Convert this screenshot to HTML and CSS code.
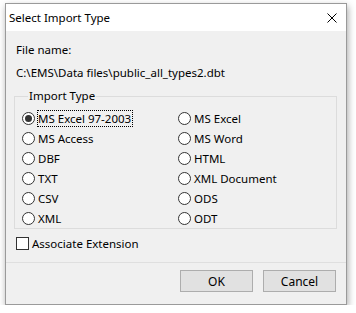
FILE: index.html
```html
<!DOCTYPE html>
<html lang="en">

<head>
    <meta charset="UTF-8" />
    <title>Select Import Type</title>
    <link rel="stylesheet" href="styles.css">
</head>

<body>
    <div class="window">
        <div class="titlebar">
            <span class="title">Select Import Type</span>
            <svg class="close" width="10" height="10" viewBox="0 0 10 10">
                <path d="M0.5 0.5 L9.5 9.5 M9.5 0.5 L0.5 9.5" stroke="#000" stroke-width="1" fill="none" />
            </svg>
        </div>

        <div class="content">
            <div class="line">File name:</div>
            <div class="line path">C:\EMS\Data files\public_all_types2.dbt</div>

            <fieldset class="group">
                <legend>Import Type</legend>
                <div class="options">
                    <div class="option"><span class="radio checked"></span><span class="label focus">MS Excel 97-2003</span></div>
                    <div class="option"><span class="radio"></span><span class="label">MS Excel</span></div>
                    <div class="option"><span class="radio"></span><span class="label">MS Access</span></div>
                    <div class="option"><span class="radio"></span><span class="label">MS Word</span></div>
                    <div class="option"><span class="radio"></span><span class="label">DBF</span></div>
                    <div class="option"><span class="radio"></span><span class="label">HTML</span></div>
                    <div class="option"><span class="radio"></span><span class="label">TXT</span></div>
                    <div class="option"><span class="radio"></span><span class="label">XML Document</span></div>
                    <div class="option"><span class="radio"></span><span class="label">CSV</span></div>
                    <div class="option"><span class="radio"></span><span class="label">ODS</span></div>
                    <div class="option"><span class="radio"></span><span class="label">XML</span></div>
                    <div class="option"><span class="radio"></span><span class="label">ODT</span></div>
                </div>
            </fieldset>

            <div class="check-row"><span class="checkbox"></span><span class="label">Associate Extension</span></div>
        </div>

        <div class="footer">
            <button class="btn">OK</button>
            <button class="btn">Cancel</button>
        </div>
    </div>
</body>

</html>
```

FILE: styles.css
```css
:root {
    --face: #f0f0f0;
    --text: #000000;
    --mark: #333333;
}

body {
    margin: 0;
    background: #ffffff;
    font-family: 'Noto Sans', 'Segoe UI', sans-serif;
    font-size: 11.5px;
    color: var(--text);
}

.window {
    margin: 3px 0 0 5px;
    width: 340px;
    border: 1px solid #9a9a9a;
    background: var(--face);
    box-shadow: 1px 3px 7px rgba(0, 0, 0, 0.35);
}

.titlebar {
    height: 27px;
    background: #ffffff;
    display: flex;
    align-items: center;
    justify-content: space-between;
    padding: 0 9px 0 3px;
}

.close {
    display: block;
}

.content {
    padding: 11px 9px 0 10px;
}

.line {
    height: 16px;
    line-height: 16px;
}

.path {
    margin-top: 7px;
}

.group {
    margin: 7px 0 0 -2px;
    padding: 4px 0 0 7px;
    border: 1px solid #dcdcdc;
    min-width: 0;
}

.group legend {
    margin-left: 6px;
    padding: 0 1px;
    line-height: 16px;
}

.options {
    display: grid;
    grid-template-columns: 156px 1fr;
    grid-auto-rows: 20px;
}

.option,
.check-row {
    display: flex;
    align-items: center;
}

.radio {
    box-sizing: border-box;
    width: 13px;
    height: 13px;
    border: 1px solid var(--mark);
    border-radius: 50%;
    background: #ffffff;
    display: flex;
    align-items: center;
    justify-content: center;
    flex: none;
}

.radio.checked::after {
    content: "";
    width: 7px;
    height: 7px;
    border-radius: 50%;
    background: var(--mark);
}

.label {
    margin-left: 2px;
    line-height: 15px;
    padding: 0 1px 0 0;
    border: 1px dotted transparent;
}

.label.focus {
    border-color: #000000;
}

.check-row {
    margin-top: 6px;
    height: 16px;
}

.checkbox {
    box-sizing: border-box;
    width: 13px;
    height: 13px;
    border: 1px solid var(--mark);
    background: #ffffff;
    flex: none;
}

.check-row .label {
    margin-left: 2px;
}

.footer {
    margin-top: 11px;
    border-top: 1px solid #dfdfdf;
    display: flex;
    justify-content: flex-end;
    gap: 10px;
    padding: 7px 10px 12px 0;
}

.btn {
    width: 73px;
    height: 22px;
    font-family: inherit;
    font-size: 12px;
    color: var(--text);
    background: #e1e1e1;
    border: 1px solid #adadad;
    border-radius: 0;
    padding: 0;
}
```
